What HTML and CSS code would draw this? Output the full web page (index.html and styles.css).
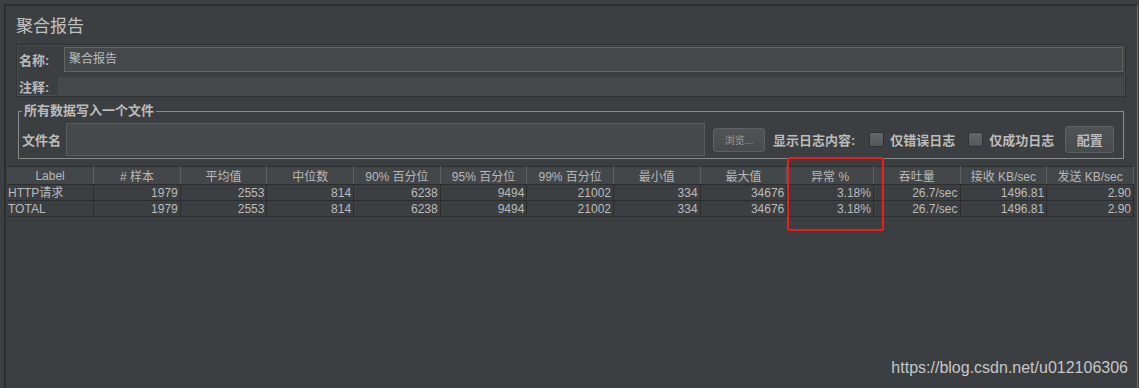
FILE: index.html
```html
<!DOCTYPE html>
<html lang="zh-CN">
<head>
    <meta charset="UTF-8">
    <title>聚合报告</title>
    <link rel="stylesheet" href="styles.css">
</head>
<body>
    <div class="frame">
        <h1 class="title">聚合报告</h1>

        <div class="name-panel">
            <div class="field-row">
                <span class="field-label name-label">名称:</span>
                <div class="input name-input">聚合报告</div>
            </div>
            <div class="field-row">
                <span class="field-label comment-label">注释:</span>
                <div class="input comment-input"></div>
            </div>
        </div>

        <div class="file-group">
            <div class="group-title">所有数据写入一个文件</div>
            <div class="file-row">
                <span class="field-label file-label">文件名</span>
                <div class="input file-input"></div>
                <button class="btn btn-browse">浏览...</button>
                <span class="log-label">显示日志内容:</span>
                <span class="check"><span class="box"></span>仅错误日志</span>
                <span class="check"><span class="box"></span>仅成功日志</span>
                <button class="btn btn-config">配置</button>
            </div>
        </div>

        <table class="report">
            <thead>
                <tr>
                    <th>Label</th>
                    <th># 样本</th>
                    <th>平均值</th>
                    <th>中位数</th>
                    <th>90% 百分位</th>
                    <th>95% 百分位</th>
                    <th>99% 百分位</th>
                    <th>最小值</th>
                    <th>最大值</th>
                    <th>异常 %</th>
                    <th>吞吐量</th>
                    <th>接收 KB/sec</th>
                    <th>发送 KB/sec</th>
                </tr>
            </thead>
            <tbody>
                <tr>
                    <td class="label-cell">HTTP请求</td>
                    <td>1979</td>
                    <td>2553</td>
                    <td>814</td>
                    <td>6238</td>
                    <td>9494</td>
                    <td>21002</td>
                    <td>334</td>
                    <td>34676</td>
                    <td>3.18%</td>
                    <td>26.7/sec</td>
                    <td>1496.81</td>
                    <td>2.90</td>
                </tr>
                <tr>
                    <td class="label-cell">TOTAL</td>
                    <td>1979</td>
                    <td>2553</td>
                    <td>814</td>
                    <td>6238</td>
                    <td>9494</td>
                    <td>21002</td>
                    <td>334</td>
                    <td>34676</td>
                    <td>3.18%</td>
                    <td>26.7/sec</td>
                    <td>1496.81</td>
                    <td>2.90</td>
                </tr>
            </tbody>
        </table>
    </div>

    <!-- annotation drawn over the screenshot -->
    <div class="highlight"></div>
    <div class="watermark">https://blog.csdn.net/u012106306</div>
</body>
</html>
```

FILE: styles.css
```css
:root {
    --bg-color: #3c3f41;
    --input-bg: #45494a;
    --input-border: #646464;
    --text-color: #bbbbbb;
    --dark-line: #2b2d2f;
    --group-line: #8a8a8a;
}

* {
    margin: 0;
    padding: 0;
    box-sizing: border-box;
}

body {
    font-family: 'Liberation Sans', 'Noto Sans CJK SC', sans-serif;
    color: var(--text-color);
    background-color: var(--bg-color);
    width: 1139px;
    height: 388px;
    overflow: hidden;
}

.frame {
    margin: 4px 0 0 4px;
    width: 1134px;
    height: 384px;
    border-top: 2px solid var(--dark-line);
    border-left: 2px solid var(--dark-line);
    border-right: 1px solid #6a6c6e;
}

.title {
    font-size: 17px;
    font-weight: normal;
    line-height: 20px;
    margin: 11px 0 0 10px;
    color: #c0c0c0;
}

.name-panel {
    margin: 7px 0 0 10px;
    width: 1110px;
    border: 1px solid #2f3133;
    box-shadow: inset 0 0 0 1px #4b4f51;
    padding: 2px 2px 0 1px;
    display: flex;
    flex-direction: column;
    gap: 5px;
}

.field-row {
    display: flex;
    align-items: center;
}

.field-label {
    font-size: 13px;
    font-weight: bold;
    padding-left: 1px;
}

.name-label {
    width: 46px;
}

.comment-label {
    width: 40px;
}

.input {
    background-color: var(--input-bg);
    font-size: 12px;
}

.name-input {
    flex: 1;
    height: 25px;
    line-height: 23px;
    border: 1px solid var(--input-border);
    padding-left: 4px;
}

.comment-input {
    flex: 1;
    height: 19px;
}

.file-group {
    margin: 14px 0 0 12px;
    width: 1106px;
    height: 48px;
    border: 1px solid var(--group-line);
}

.group-title {
    display: table;
    margin: -9px 0 0 3px;
    padding: 0 2px;
    font-size: 13px;
    font-weight: bold;
    line-height: 16px;
    background-color: var(--bg-color);
}

.file-row {
    display: flex;
    align-items: center;
    margin-top: 4px;
    padding-left: 2px;
}

.file-label {
    width: 45px;
}

.file-input {
    width: 639px;
    height: 33px;
    border: 1px solid #5a5d5f;
}

.btn {
    font-family: inherit;
    color: var(--text-color);
    background: linear-gradient(#505456, #474b4d);
    border: 1px solid #5e6163;
    border-radius: 3px;
}

.btn-browse {
    width: 52px;
    height: 24px;
    margin-left: 8px;
    font-size: 10px;
    color: #9a9c9e;
}

.log-label {
    margin-left: 8px;
    font-size: 13px;
    font-weight: bold;
}

.check {
    display: flex;
    align-items: center;
    gap: 6px;
    margin-left: 14px;
    font-size: 13px;
    font-weight: bold;
}

.check + .check {
    margin-left: 13px;
}

.box {
    width: 15px;
    height: 15px;
    border: 1px solid #2f3234;
    border-radius: 2px;
    background: linear-gradient(#63676a, #53575a);
}

.btn-config {
    width: 49px;
    height: 27px;
    margin-left: 11px;
    font-size: 13px;
    font-weight: bold;
}

.report {
    margin: 7px 0 0 1px;
    width: 1127px;
    table-layout: fixed;
    border-collapse: collapse;
    font-size: 12px;
}

.report th {
    height: 18px;
    padding: 0;
    font-size: 12px;
    font-weight: normal;
    text-align: center;
    background-color: #43474a;
    border-top: 1px solid var(--dark-line);
    border-bottom: 1px solid var(--dark-line);
    border-right: 1px solid #5c5f61;
    color: #b8b8b8;
}

.report td {
    height: 16px;
    line-height: 14px;
    text-align: right;
    padding: 0 2px 0 0;
    border-right: 1px solid var(--dark-line);
    border-bottom: 1px solid var(--dark-line);
    white-space: nowrap;
}

.report td.label-cell {
    text-align: left;
    padding-left: 1px;
}

.highlight {
    position: absolute;
    left: 787px;
    top: 157px;
    width: 97px;
    height: 74px;
    border: 2px solid #f01c1c;
    border-radius: 3px;
}

.watermark {
    position: absolute;
    right: 11px;
    top: 359px;
    font-size: 16px;
    line-height: 18px;
    color: #c6c6c6;
}
```
